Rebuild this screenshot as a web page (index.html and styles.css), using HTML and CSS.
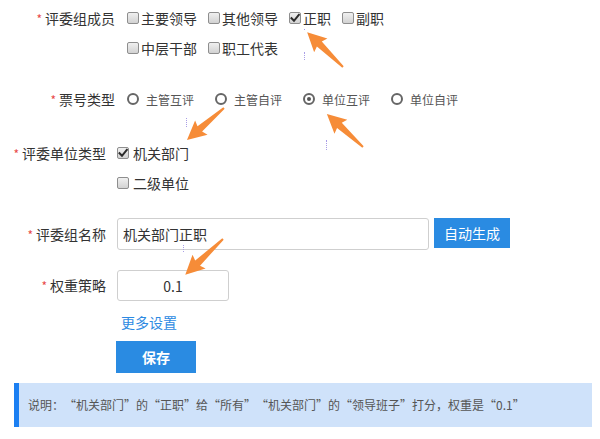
FILE: index.html
```html
<!DOCTYPE html>
<html lang="zh-CN">
<head>
<meta charset="utf-8">
<title>评委组设置</title>
<link rel="stylesheet" href="styles.css">
</head>
<body>
<div class="page">
  <div class="field f-a">
    <div class="label"><span class="req">*</span>评委组成员</div>
    <div class="ctrl">
      <div class="line">
        <label class="chk"><span class="box"></span>主要领导</label>
        <label class="chk"><span class="box"></span>其他领导</label>
        <label class="chk"><span class="box checked"><svg viewBox="0 0 10 10" class="tick"><path d="M1.5 5.2 L4 7.8 L8.8 1.8"/></svg></span>正职</label>
        <label class="chk"><span class="box"></span>副职</label>
      </div>
      <div class="line">
        <label class="chk"><span class="box"></span>中层干部</label>
        <label class="chk"><span class="box"></span>职工代表</label>
      </div>
    </div>
  </div>

  <div class="field f-a radios-row">
    <div class="label"><span class="req">*</span>票号类型</div>
    <div class="ctrl">
      <div class="line">
        <label class="radio"><span class="dot"></span>主管互评</label>
        <label class="radio"><span class="dot"></span>主管自评</label>
        <label class="radio"><span class="dot on"></span>单位互评</label>
        <label class="radio"><span class="dot"></span>单位自评</label>
      </div>
    </div>
  </div>

  <div class="field f-b units-row">
    <div class="label"><span class="req">*</span>评委单位类型</div>
    <div class="ctrl">
      <div class="line">
        <label class="chk big"><span class="box checked"><svg viewBox="0 0 10 10" class="tick"><path d="M1.5 5.2 L4 7.8 L8.8 1.8"/></svg></span>机关部门</label>
      </div>
      <div class="line">
        <label class="chk big"><span class="box"></span>二级单位</label>
      </div>
    </div>
  </div>

  <div class="field f-b name-row">
    <div class="label"><span class="req">*</span>评委组名称</div>
    <input class="input name-input" type="text" value="机关部门正职">
    <button class="btn gen-btn" type="button">自动生成</button>
  </div>

  <div class="field f-b weight-row">
    <div class="label"><span class="req">*</span>权重策略</div>
    <input class="input weight-input" type="text" value="0.1">
  </div>

  <div class="more-row"><a class="more" href="#">更多设置</a></div>

  <div class="save-row"><button class="btn save-btn" type="button">保存</button></div>

  <div class="info">说明：“机关部门”的“正职”给“所有”“机关部门”的“领导班子”打分，权重是“0.1”</div>
</div>

<span class="dots d1"></span>
<span class="dots d2"></span>
<span class="dots d3"></span>
<span class="dots d4"></span>
<span class="dots d5"></span>

<svg class="arrows" width="600" height="439" viewBox="0 0 600 439">
  <g fill="#f68c38">
    <polygon transform="translate(343 67) rotate(-135.8)" points="0,-1 33,-3.5 31,-9.5 50,0 31,9.5 33,3.5 0,1"/>
    <polygon transform="translate(224 108) rotate(139.1)" points="0,-1 32,-3.5 30,-9.5 49,0 30,9.5 32,3.5 0,1"/>
    <polygon transform="translate(363 147) rotate(-137.5)" points="0,-1 32,-3.5 30,-9.5 49,0 30,9.5 32,3.5 0,1"/>
    <polygon transform="translate(223 239) rotate(136.5)" points="0,-1 35,-3.5 33,-9.5 52,0 33,9.5 35,3.5 0,1"/>
  </g>
</svg>
</body>
</html>
```

FILE: styles.css
```css
html, body {
  margin: 0;
  padding: 0;
}
body {
  width: 600px;
  height: 439px;
  overflow: hidden;
  position: relative;
  background: #fff;
  color: #333;
  font-family: "Noto Sans CJK SC", "Liberation Sans", sans-serif;
}
.page {
  padding-top: 3px;
}
.field {
  display: flex;
  align-items: flex-start;
}
.label {
  flex: none;
  box-sizing: border-box;
  text-align: right;
  font-size: 14px;
  line-height: 30px;
  color: #333;
  white-space: nowrap;
}
.req {
  color: #e84a4a;
  font-size: 12px;
  margin-right: 3px;
}
.f-a .label {
  width: 127px;
  padding-right: 12px;
}
.f-b .label {
  width: 117px;
  padding-right: 11px;
}
.line {
  display: flex;
  align-items: center;
  height: 30px;
}
.chk {
  display: flex;
  align-items: center;
  font-size: 14px;
  color: #333;
  margin-right: 11px;
  white-space: nowrap;
}
.box {
  position: relative;
  display: block;
  width: 10px;
  height: 10px;
  border: 1px solid #8e8e8e;
  border-radius: 2px;
  background: linear-gradient(#f0f0f0, #d2d2d2);
  margin-right: 2px;
}
.chk.big .box {
  margin-right: 4px;
}
.tick {
  position: absolute;
  left: 0;
  top: 0;
  width: 10px;
  height: 10px;
}
.tick path {
  fill: none;
  stroke: #2b2b2b;
  stroke-width: 2;
  stroke-linecap: square;
}
.radios-row {
  margin-top: 21px;
}
.radio {
  display: flex;
  align-items: center;
  font-size: 12px;
  color: #555;
  margin-right: 21px;
  white-space: nowrap;
}
.dot {
  position: relative;
  display: block;
  width: 8px;
  height: 8px;
  border: 2px solid #666;
  border-radius: 50%;
  background: #fff;
  margin-right: 7px;
}
.dot.on::after {
  content: "";
  position: absolute;
  left: 2px;
  top: 2px;
  width: 4px;
  height: 4px;
  border-radius: 50%;
  background: #555;
}
.units-row {
  margin-top: 23px;
}
.name-row {
  margin-top: 20px;
  height: 32px;
  align-items: center;
}
.weight-row {
  margin-top: 20px;
  height: 31px;
  align-items: center;
}
.name-row .label {
  line-height: 32px;
}
.weight-row .label {
  line-height: 31px;
}
.input {
  box-sizing: border-box;
  border: 1px solid #cfcfcf;
  border-radius: 3px;
  background: #fff;
  font-family: "Noto Sans CJK SC", "Liberation Sans", sans-serif;
  font-size: 14px;
  color: #333;
  margin: 0;
  outline: none;
}
.name-input {
  width: 312px;
  height: 32px;
  padding: 0 5px;
}
.weight-input {
  width: 112px;
  height: 31px;
  padding: 0;
  text-align: center;
}
.btn {
  border: none;
  margin: 0;
  padding: 0;
  background: #2a8be2;
  color: #fff;
  font-family: "Noto Sans CJK SC", "Liberation Sans", sans-serif;
  font-size: 14px;
}
.gen-btn {
  width: 76px;
  height: 30px;
  margin-left: 5px;
  align-self: flex-start;
}
.more-row {
  margin-top: 8px;
  height: 24px;
  line-height: 24px;
  padding-left: 121px;
}
.more {
  color: #2d8ae2;
  font-size: 14px;
  text-decoration: none;
}
.save-row {
  margin-top: 8px;
  padding-left: 116px;
  height: 32px;
}
.save-btn {
  width: 80px;
  height: 32px;
  font-weight: bold;
}
.info {
  box-sizing: border-box;
  margin: 10px 0 0 14px;
  width: 578px;
  height: 44px;
  line-height: 44px;
  border-left: 5px solid #1b7ff2;
  background: #cfe2fa;
  padding-left: 9px;
  font-size: 12px;
  color: #555;
  white-space: nowrap;
  text-spacing-trim: space-all;
}
.dots {
  position: absolute;
  width: 0;
  border-left: 1px dotted #a99ee6;
}
.d1 { left: 304px; top: 52px; height: 8px; }
.d2 { left: 186px; top: 118px; height: 9px; }
.d3 { left: 326px; top: 140px; height: 10px; }
.d4 { left: 183px; top: 245px; height: 7px; }
.d5 { left: 304px; top: 29px; height: 1px; }
.arrows {
  position: absolute;
  left: 0;
  top: 0;
  pointer-events: none;
}
```
